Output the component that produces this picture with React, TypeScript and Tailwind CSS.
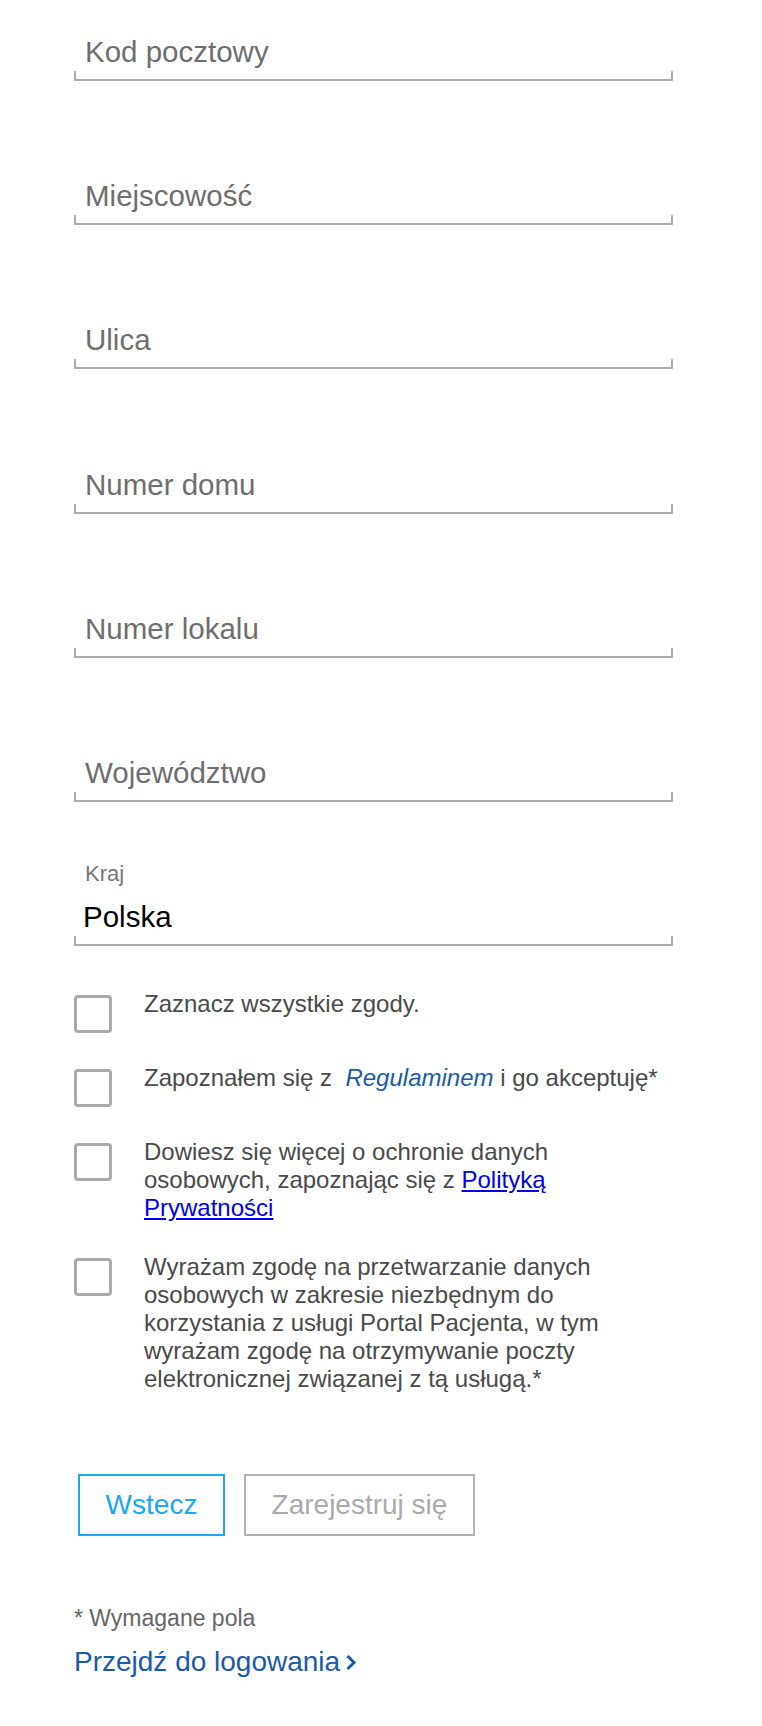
import React from "react";

function Underline() {
  return <div className="mt-[2px] h-[10px] border-x-2 border-b-2 border-[#aaaaaa]" />;
}

function Field({ label, first }: { label: string; first?: boolean }) {
  return (
    <div className={first ? "" : "mt-[98.2px]"}>
      <div className="h-[34px] pl-[11px] text-[29.5px] leading-[34px] text-[#6e6e6e]">{label}</div>
      <Underline />
    </div>
  );
}

function CheckRow({ children }: { children: React.ReactNode }) {
  return (
    <div className="flex items-start">
      <div className="mt-[5px] h-[38px] w-[38px] shrink-0 rounded-[4px] border-[3px] border-[#aaaaaa] bg-white" />
      <div className="ml-[32px] flex-1 text-[24px] leading-[28px] text-[#4a4a4a]">{children}</div>
    </div>
  );
}

export default function App() {
  return (
    <div className="min-h-[1726px] w-[762px] bg-white font-['Liberation_Sans',Arial,sans-serif]">
      <div className="ml-[74px] w-[599px] pt-[35px]">
        <Field label="Kod pocztowy" first />
        <Field label="Miejscowość" />
        <Field label="Ulica" />
        <Field label="Numer domu" />
        <Field label="Numer lokalu" />
        <Field label="Województwo" />

        <div className="mt-[59px]">
          <div className="h-[26px] pl-[11px] text-[22px] leading-[26px] text-[#777777]">Kraj</div>
          <div className="mt-[13px] h-[34px] pl-[9px] text-[29.5px] leading-[34px] text-black">Polska</div>
          <Underline />
        </div>

        <div className="mt-[44px] flex flex-col gap-[31px]">
          <CheckRow>Zaznacz wszystkie zgody.</CheckRow>
          <CheckRow>
            Zapoznałem się z{"\u00a0 "}
            <a className="italic text-[#1b5aa8]">Regulaminem</a> i go akceptuję*
          </CheckRow>
          <CheckRow>
            Dowiesz się więcej o ochronie danych osobowych, zapoznając się z{" "}
            <a className="text-[#0000ee] underline">Polityką Prywatności</a>
          </CheckRow>
          <CheckRow>
            Wyrażam zgodę na przetwarzanie danych osobowych w zakresie niezbędnym do korzystania z usługi
            Portal Pacjenta, w tym wyrażam zgodę na otrzymywanie poczty elektronicznej związanej z tą
            usługą.*
          </CheckRow>
        </div>

        <div className="mt-[81px] ml-[4px] flex gap-[19px]">
          <button className="h-[62px] w-[147px] border-2 border-[#22a6f2] bg-white text-[28px] text-[#22a6f2]">
            Wstecz
          </button>
          <button className="h-[62px] w-[231px] border-2 border-[#b3b3b3] bg-white text-[28px] text-[#aaaaaa]">
            Zarejestruj się
          </button>
        </div>

        <div className="mt-[68px] text-[23px] leading-[28px] text-[#666666]">* Wymagane pola</div>
        <div className="mt-[14px] flex items-center text-[28px] leading-[32px] text-[#1b5aa8]">
          <span>Przejdź do logowania</span>
          <svg width="12" height="17" viewBox="0 0 12 17" className="ml-[5px] mt-[2px]">
            <polyline points="2.5,2 9,8.5 2.5,15" fill="none" stroke="#1b5aa8" strokeWidth="3" />
          </svg>
        </div>
      </div>
    </div>
  );
}
